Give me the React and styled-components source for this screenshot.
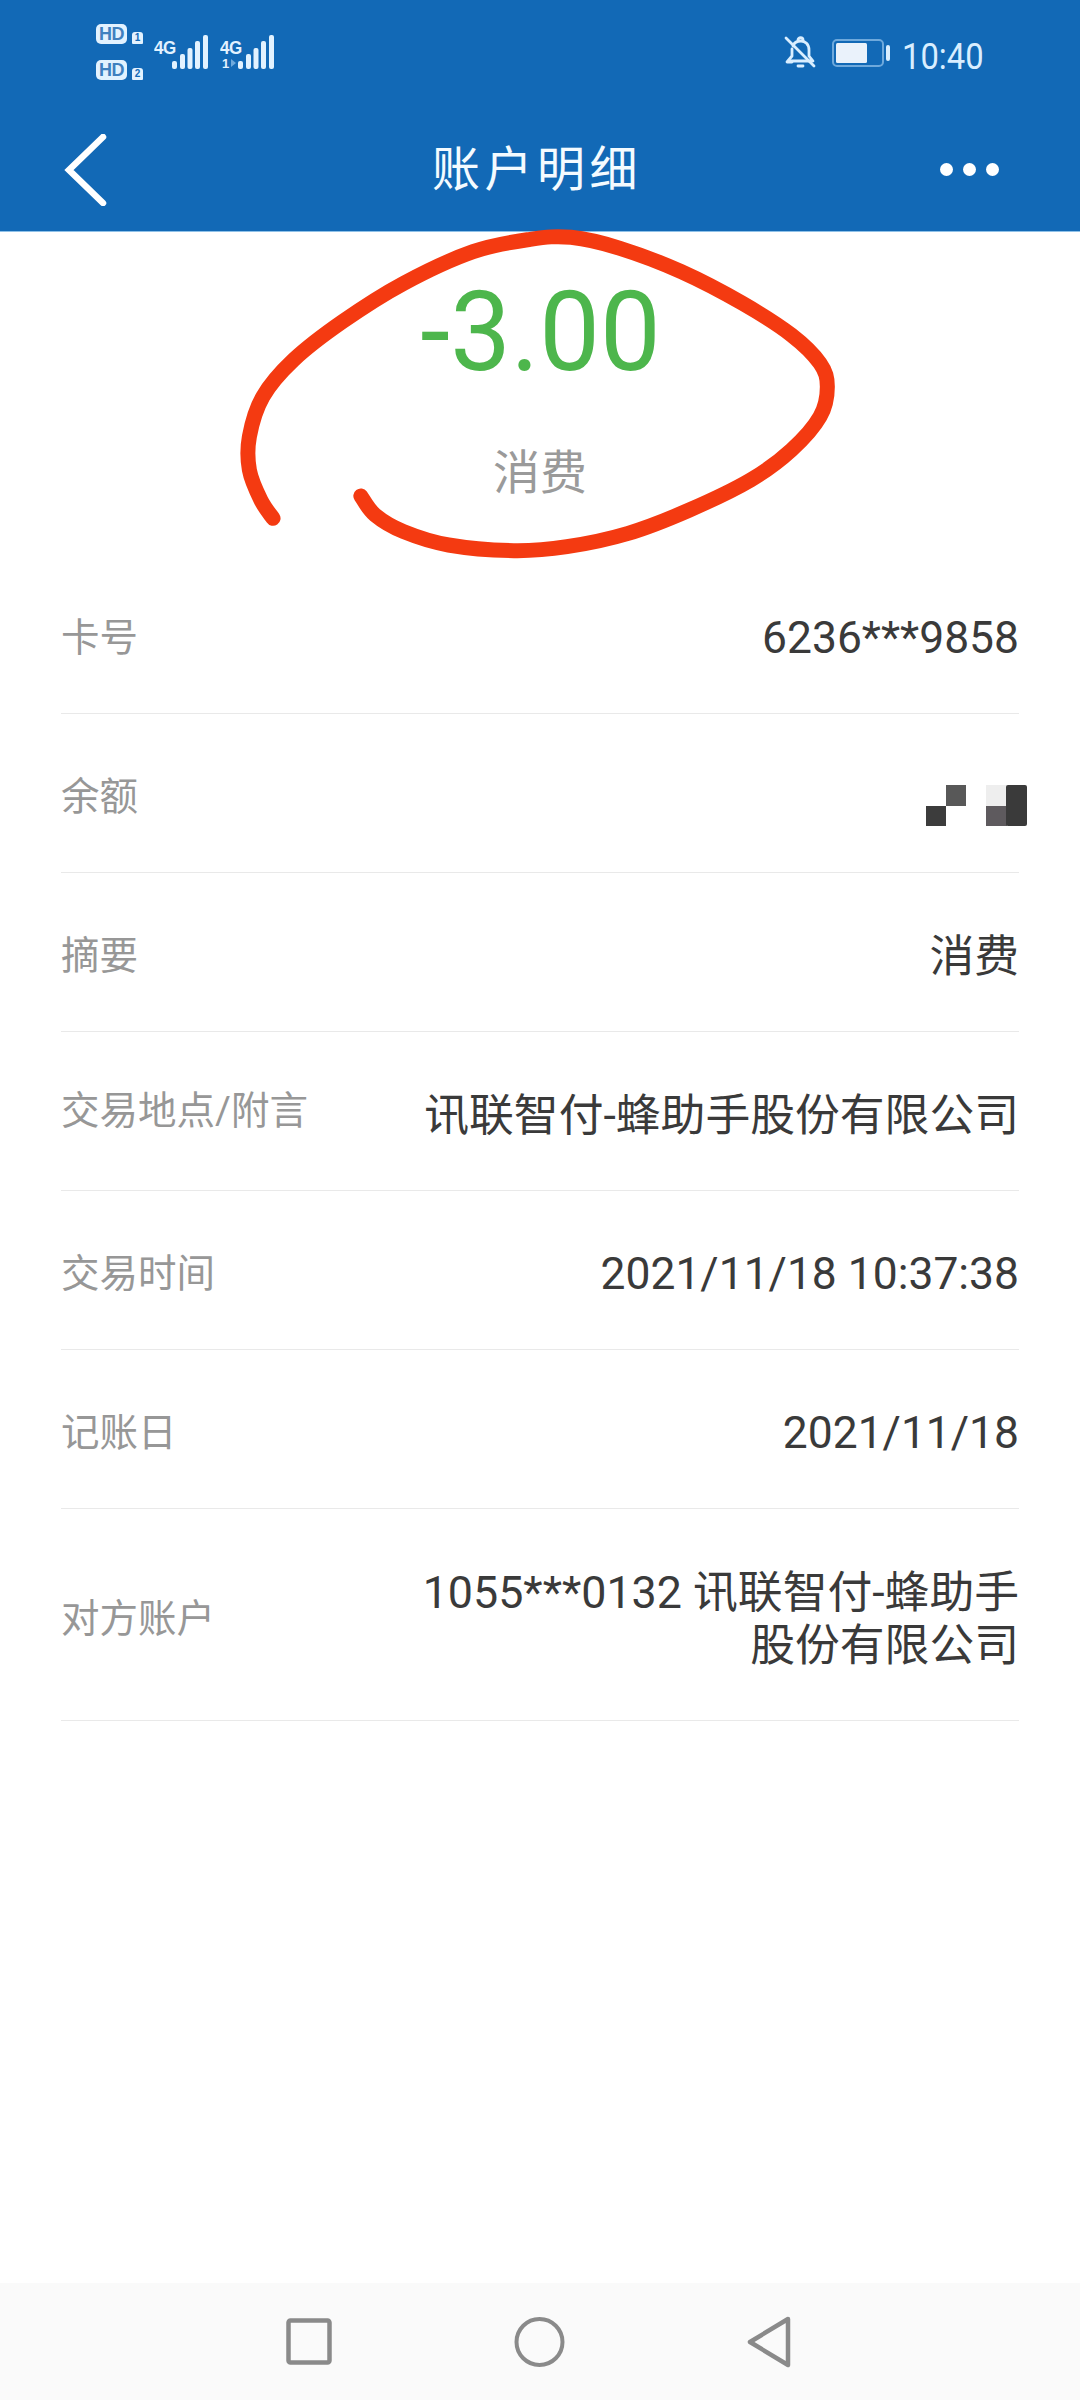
import React from "react";
import styled, { createGlobalStyle } from "styled-components";

const Global = createGlobalStyle`
  html, body { margin: 0; padding: 0; background: #fff; }
  * { box-sizing: border-box; }
  body { font-family: Roboto, "Noto Sans CJK SC", sans-serif; }
`;

const Page = styled.div`
  width: 1080px;
  height: 2400px;
  display: flex;
  flex-direction: column;
  background: #fff;
`;
const Header = styled.header`
  background: #1269b6;
  color: #fff;
  border-bottom: 1px solid #8fc1e8;
`;
const StatusBar = styled.div`
  height: 108px;
  display: flex;
  justify-content: space-between;
  align-items: flex-start;
  padding: 24px 97px 0 96px;
  color: #d9eeff;
`;
const StatusLeft = styled.div`
  display: flex;
  align-items: flex-start;
`;
const SimColumn = styled.div`
  display: flex;
  flex-direction: column;
  gap: 16px;
`;
const SimLine = styled.div`
  display: flex;
  align-items: flex-end;
  gap: 5px;
  height: 20px;
`;
const HdBadge = styled.span`
  width: 31px;
  height: 20px;
  background: #e2f2ff;
  border-radius: 5px;
  font: 700 18px/20px "Liberation Sans", sans-serif;
  text-align: center;
  color: #3f80bf;
  letter-spacing: -0.5px;
`;
const SimNumber = styled.span`
  width: 11px;
  height: 12px;
  border-radius: 3px 3px 1px 1px;
  background: #e2f2ff;
  color: #1269b6;
  font: 700 10px/12px "Liberation Sans", sans-serif;
  text-align: center;
`;
const Network = styled.div`
  position: relative;
  width: ${(p) => p.$width}px;
  height: 46px;
  margin-left: ${(p) => p.$gap}px;
  margin-top: 11px;
  display: flex;
  align-items: flex-start;
`;
const NetLabel = styled.span`
  font: 700 17px/20px "Liberation Sans", sans-serif;
  letter-spacing: -0.5px;
  transform: scaleY(1.1);
  transform-origin: top left;
  color: #e2f2ff;
  margin-top: 2px;
`;
const SimTag = styled.span`
  position: absolute;
  left: 2px;
  top: 22px;
  font: 700 13px/13px "Liberation Sans", sans-serif;
  color: #e2f2ff;
`;
const DataArrow = styled.span`
  position: absolute;
  left: 11px;
  top: 24px;
  border-left: 5px solid #6ea9dc;
  border-top: 4px solid transparent;
  border-bottom: 4px solid transparent;
`;
const Bars = styled.svg`
  position: absolute;
  right: 0;
  top: 0;
`;
const StatusRight = styled.div`
  display: flex;
  align-items: flex-start;
`;
const Clock = styled.span`
  font: 400 36px/42px Roboto, sans-serif;
  transform: scaleX(0.91);
  transform-origin: left center;
  width: 81px;
  margin-left: 12px;
  margin-top: 12px;
  color: #d9eeff;
  white-space: nowrap;
`;
const StatusIcon = styled.svg`
  display: block;
  margin-top: ${(p) => p.$top}px;
  margin-left: ${(p) => p.$left || 0}px;
`;
const Toolbar = styled.div`
  height: 123px;
  display: grid;
  grid-template-columns: 1fr auto 1fr;
  align-items: center;
  padding: 0 81px 0 64px;
`;
const Title = styled.h1`
  margin: 0 0 0 11px;
  font: 400 48px/60px Roboto, "Noto Sans CJK SC", sans-serif;
  letter-spacing: 4.5px;
  color: #f4fbff;
`;
const BackIcon = styled.svg`
  display: block;
`;
const More = styled.div`
  justify-self: end;
  display: flex;
  gap: 10px;
`;
const Dot = styled.span`
  width: 13px;
  height: 13px;
  border-radius: 50%;
  background: #fff;
`;
const Hero = styled.section`
  position: relative;
  height: 323px;
  display: flex;
  flex-direction: column;
  align-items: center;
  padding-top: 46px;
`;
const Amount = styled.div`
  font: 400 108px/108px Roboto, sans-serif;
  color: #4db64c;
  margin-left: 1px;
  transform: scaleY(1.03);
`;
const HeroType = styled.div`
  margin-top: 58px;
  font: 400 47px/50px "Noto Sans CJK SC", sans-serif;
  color: #9a9a9a;
`;
const Annotation = styled.svg`
  position: absolute;
  left: 220px;
  top: -12px;
  pointer-events: none;
`;
const List = styled.div`
  padding: 0 61px;
`;
const Row = styled.div`
  min-height: ${(p) => (p.$tall ? 212 : 159)}px;
  border-bottom: 1px solid #e9e9e9;
  display: flex;
  justify-content: space-between;
  align-items: center;
`;
const Label = styled.span`
  font: 400 38.5px/50px "Noto Sans CJK SC", Roboto, sans-serif;
  color: #979797;
  white-space: nowrap;
`;
const LatinLabel = styled(Label)`
  font-family: Roboto, "Noto Sans CJK SC", sans-serif;
`;
const Value = styled.span`
  font: 400 ${(p) => (p.$cjk ? 44.8 : 44.4)}px/53px Roboto, "Noto Sans CJK SC", sans-serif;
  color: #3a3a3a;
  text-align: right;
  max-width: 610px;
  padding-top: 8px;
  white-space: ${(p) => (p.$wrap ? "normal" : "nowrap")};
`;
const Mosaic = styled.svg`
  display: block;
  margin-right: -8px;
  margin-top: 25px;
`;
const Spacer = styled.div`
  flex: 1;
`;
const NavBar = styled.nav`
  height: 117px;
  background: #fafafa;
  display: flex;
  align-items: center;
  padding: 0 0 0 286px;
  gap: 182px;
`;
const NavIcon = styled.svg`
  display: block;
`;

const smooth = (pts) => {
  let d = `M${pts[0][0]} ${pts[0][1]}`;
  for (let i = 0; i < pts.length - 1; i++) {
    const p0 = pts[i - 1] || pts[i];
    const p1 = pts[i];
    const p2 = pts[i + 1];
    const p3 = pts[i + 2] || p2;
    const c1 = [p1[0] + (p2[0] - p0[0]) / 6, p1[1] + (p2[1] - p0[1]) / 6];
    const c2 = [p2[0] - (p3[0] - p1[0]) / 6, p2[1] - (p3[1] - p1[1]) / 6];
    d += `C${c1[0]} ${c1[1]} ${c2[0]} ${c2[1]} ${p2[0]} ${p2[1]}`;
  }
  return d;
};

const circlePoints = [
  [130, 895], [100, 840], [72, 750], [72, 650], [105, 530], [180, 420], [300, 305],
  [450, 190], [620, 95], [760, 58], [860, 52], [980, 85], [1130, 155], [1280, 250],
  [1400, 345], [1470, 430], [1488, 500], [1470, 590], [1400, 690], [1300, 780],
  [1150, 870], [1000, 940], [850, 980], [720, 992], [560, 975], [450, 935], [380, 885], [345, 828],
];

const SignalBars = () => (
  <Bars width="36" height="34" viewBox="0 0 36 34">
    <g fill="#e2f2ff">
      <rect x="0" y="26" width="5" height="8" rx="2" />
      <rect x="8" y="19" width="5" height="15" rx="2" />
      <rect x="15.5" y="13" width="5" height="21" rx="2" />
      <rect x="23" y="6" width="5" height="28" rx="2" />
      <rect x="31" y="0" width="5" height="34" rx="2" />
    </g>
  </Bars>
);

const rows = [
  ["卡号", "6236***9858"],
  ["余额", null],
  ["摘要", "消费", true],
  ["交易地点/附言", "讯联智付-蜂助手股份有限公司", true],
  ["交易时间", "2021/11/18 10:37:38"],
  ["记账日", "2021/11/18"],
];

export default function App() {
  return (
    <Page>
      <Global />
      <Header>
        <StatusBar>
          <StatusLeft>
            <SimColumn>
              <SimLine><HdBadge>HD</HdBadge><SimNumber>1</SimNumber></SimLine>
              <SimLine><HdBadge>HD</HdBadge><SimNumber>2</SimNumber></SimLine>
            </SimColumn>
            <Network $width={54} $gap={11}>
              <NetLabel>4G</NetLabel>
              <SignalBars />
            </Network>
            <Network $width={54} $gap={12}>
              <NetLabel>4G</NetLabel>
              <SimTag>1</SimTag>
              <DataArrow />
              <SignalBars />
            </Network>
          </StatusLeft>
          <StatusRight>
            <StatusIcon $top={12} width="32" height="33" viewBox="0 0 32 33" fill="none" stroke="#d9eeff" strokeWidth="2.8" strokeLinecap="round" strokeLinejoin="round">
              <path d="M9 10c1-3 4-5 8-5s8 3 8 9v6l4 5H7" />
              <path d="M8 13v7l-5 6h5" />
              <path d="M14 30h5" />
              <path d="M14 4c0-3 5-3 5 0" />
              <path d="M2 2l28 28" />
            </StatusIcon>
            <StatusIcon $top={15} $left={16} width="58" height="28" viewBox="0 0 58 28" fill="none">
              <rect x="1" y="1" width="50" height="26" rx="4" stroke="#6ea9dc" strokeWidth="2" />
              <rect x="4" y="4" width="31" height="20" rx="1.5" fill="#eaf2fb" />
              <rect x="54" y="6" width="4" height="16" rx="2" fill="#d9eeff" />
            </StatusIcon>
            <Clock>10:40</Clock>
          </StatusRight>
        </StatusBar>
        <Toolbar>
          <BackIcon width="44" height="72" viewBox="0 0 44 72" fill="none" stroke="#fff" strokeWidth="6.5" strokeLinecap="round" strokeLinejoin="miter">
            <path d="M39 3L5 36l34 33" />
          </BackIcon>
          <Title>账户明细</Title>
          <More><Dot /><Dot /><Dot /></More>
        </Toolbar>
      </Header>
      <Hero>
        <Amount>-3.00</Amount>
        <HeroType>消费</HeroType>
        <Annotation width="640" height="350" viewBox="0 0 1568 1050" preserveAspectRatio="none" fill="none">
          <path d={smooth(circlePoints)} stroke="#f43a11" strokeWidth="15" strokeLinecap="round" strokeLinejoin="round" vectorEffect="non-scaling-stroke" />
        </Annotation>
      </Hero>
      <List>
        {rows.map(([label, value, cjk]) => (
          <Row key={label}>
            {label.includes("/") ? <LatinLabel>{label}</LatinLabel> : <Label>{label}</Label>}
            {value ? (
              <Value $cjk={cjk}>{value}</Value>
            ) : (
              <Mosaic width="101" height="41" viewBox="0 0 101 41">
                <rect x="0" y="21" width="20" height="20" fill="#3c3c3c" />
                <rect x="20" y="0" width="20" height="21" fill="#585858" />
                <rect x="60" y="0" width="21" height="21" fill="#eeeeee" />
                <rect x="60" y="21" width="21" height="20" fill="#5e5a5e" />
                <rect x="80" y="0" width="21" height="41" rx="2" fill="#3a3a3a" />
              </Mosaic>
            )}
          </Row>
        ))}
        <Row $tall>
          <Label>对方账户</Label>
          <Value $wrap $cjk>1055***0132 讯联智付-蜂助手股份有限公司</Value>
        </Row>
      </List>
      <Spacer />
      <NavBar>
        <NavIcon width="46" height="47" viewBox="0 0 46 47" fill="none" stroke="#8a8a8a" strokeWidth="4.5" strokeLinejoin="round">
          <rect x="2.5" y="2.5" width="41" height="42" rx="2" />
        </NavIcon>
        <NavIcon width="51" height="52" viewBox="0 0 51 52" fill="none" stroke="#8a8a8a" strokeWidth="4">
          <circle cx="25.5" cy="26" r="23" />
        </NavIcon>
        <NavIcon width="44" height="52" viewBox="0 0 44 52" fill="none" stroke="#8a8a8a" strokeWidth="4.5" strokeLinejoin="round">
          <path d="M41 3L3 26l38 23z" />
        </NavIcon>
      </NavBar>
    </Page>
  );
}
